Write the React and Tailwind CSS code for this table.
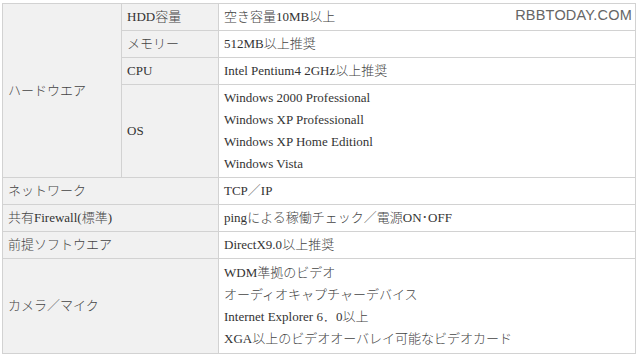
const specs = [
  { group: 'ハードウエア', label: 'HDD容量', lines: ['空き容量10MB以上'] },
  { label: 'メモリー', lines: ['512MB以上推奨'] },
  { label: 'CPU', lines: ['Intel Pentium4 2GHz以上推奨'] },
  {
    label: 'OS',
    lines: [
      'Windows 2000 Professional',
      'Windows XP Professionall',
      'Windows XP Home Editionl',
      'Windows Vista',
    ],
  },
];

const others = [
  { label: 'ネットワーク', lines: ['TCP／IP'] },
  { label: '共有Firewall(標準)', lines: ['pingによる稼働チェック／電源ON･OFF'] },
  { label: '前提ソフトウエア', lines: ['DirectX9.0以上推奨'] },
  {
    label: 'カメラ／マイク',
    lines: [
      'WDM準拠のビデオ',
      'オーディオキャプチャーデバイス',
      'Internet Explorer 6．0以上',
      'XGA以上のビデオオーバレイ可能なビデオカード',
    ],
    tall: true,
  },
];

const cell = 'border border-[#d2d2d2] px-[5px] align-middle';
const head = `${cell} bg-[#f1f1f1]`;

// japanese runs render thin gothic, latin stays in the serif
function Mixed({ text }) {
  return text.split(/([\u3000-\u9fff\uff00-\uffef]+)/).map((part, i) =>
    i % 2 ? (
      <span key={i} className="font-light text-[#444]">
        {part}
      </span>
    ) : (
      part
    )
  );
}

function Lines({ lines, tall }) {
  return (
    <div className={tall ? 'py-[3px]' : 'py-[2px]'}>
      {lines.map((l) => (
        <div key={l} className="leading-[22px] whitespace-nowrap">
          <Mixed text={l} />
        </div>
      ))}
    </div>
  );
}

export default function App() {
  return (
    <div className="w-[640px] h-[356px] bg-white relative overflow-hidden">
      <div className="pt-[3px] pl-[2px]">
        <table
          className="border-collapse w-[634px] table-fixed text-[13px] text-[#333]"
          style={{ fontFamily: '"Liberation Serif", "Noto Sans CJK JP", serif' }}
        >
          <colgroup>
            <col className="w-[119px]" />
            <col className="w-[97px]" />
            <col />
          </colgroup>
          <tbody>
            {specs.map((row, i) => (
              <tr key={row.label}>
                {i === 0 && (
                  <td rowSpan={4} className={head}>
                    <Mixed text={row.group} />
                  </td>
                )}
                <td className={head}>
                  <Mixed text={row.label} />
                </td>
                <td className={`${cell} px-[4px]`}>
                  <Lines lines={row.lines} />
                </td>
              </tr>
            ))}
            {others.map((row) => (
              <tr key={row.label}>
                <td colSpan={2} className={`${head} whitespace-nowrap`}>
                  <Mixed text={row.label} />
                </td>
                <td className={`${cell} px-[4px]`}>
                  <Lines lines={row.lines} tall={row.tall} />
                </td>
              </tr>
            ))}
          </tbody>
        </table>
      </div>

      {/* watermark */}
      <div
        className="absolute top-[5px] right-[8px] text-[14.5px] text-[#666] tracking-[0.2px]"
        style={{ fontFamily: '"Liberation Sans", sans-serif', textShadow: '0 0 2px #fff' }}
      >
        RBBTODAY.COM
      </div>
    </div>
  );
}
